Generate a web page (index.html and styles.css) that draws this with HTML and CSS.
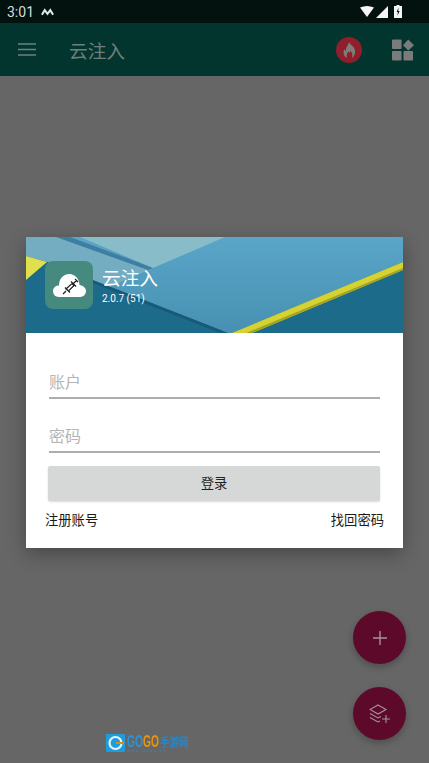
FILE: index.html
```html
<!DOCTYPE html>
<html lang="zh-CN">
<head>
  <meta charset="UTF-8">
  <meta name="viewport" content="width=device-width, initial-scale=1.0">
  <title>云注入</title>
  <link rel="stylesheet" href="styles.css">
</head>
<body>
  <div class="status-bar">
    <span class="clock">3:01</span>
    <svg class="status-m" width="13" height="8" viewBox="0 0 14 8"><path d="M1 7 L4 2 L7 6 L10 2 L13 7" fill="none" stroke="#e2e6e5" stroke-width="2.200"/></svg>
    <span class="spacer"></span>
    <svg width="14" height="11" viewBox="0 0 14 11"><path d="M0 1.500 Q7 -1.500 14 1.500 L7 11 Z" fill="#f4f6f5"/></svg>
    <svg class="status-signal" width="12" height="12" viewBox="0 0 12 12"><path d="M0 12 L12 0 L12 12 Z" fill="#f4f6f5"/></svg>
    <svg class="status-battery" width="8" height="13" viewBox="0 0 8 13"><path d="M2.500 0 H5.500 V1 H8 V13 H0 V1 H2.500 Z" fill="#f4f6f5"/><path d="M4.600 2.500 L2.600 7 H3.900 L3.400 10.800 L5.600 6 H4.200 Z" fill="#03120f"/></svg>
  </div>

  <header class="toolbar">
    <svg class="menu-icon" width="18" height="13" viewBox="0 0 18 13"><path d="M0 1 H18 M0 6.500 H18 M0 12 H18" stroke="#6e7f7c" stroke-width="1.600"/></svg>
    <span class="toolbar-title">云注入</span>
    <span class="spacer"></span>
    <span class="fire-badge">
      <svg width="15" height="16" viewBox="0 0 18 20"><path d="M9 0 C10 4 13 4 15 8 C17 12 16 17 12 20 C13.500 16 12 13 10 11 C9.500 14 8 14 7.500 12 C5.500 14 5 17 6 20 C2 18 0.500 13 2.500 9 C3 10.500 4 11 4.500 11 C4 7 7 4 9 0 Z" fill="#7d7d7a"/></svg>
    </span>
    <svg class="grid-icon" width="22" height="22" viewBox="0 0 23 22" fill="#7b7b7b">
      <rect x="0" y="0" width="10" height="10" rx="1"/>
      <path d="M17 0 L23 6 L17 11.500 L11.500 6 Z"/>
      <rect x="0" y="12" width="10" height="10" rx="1"/>
      <rect x="12" y="12" width="10" height="10" rx="1"/>
    </svg>
  </header>

  <main class="content">
    <div class="dialog">
      <div class="dialog-head">
        <svg class="head-art" width="377" height="96" viewBox="0 0 377 96">
          <defs>
            <linearGradient id="panel" x1="0" y1="0" x2="0" y2="1">
              <stop offset="0" stop-color="#5aa6c8"/>
              <stop offset="1" stop-color="#4790b2"/>
            </linearGradient>
          </defs>
          <rect width="377" height="96" fill="#1d6b8a"/>
          <polygon points="0,0 377,0 377,25 206,96 202,96 21,25" fill="url(#panel)"/>
          <polygon points="0,0 30,0 127,31 84,50 21,25 0,19" fill="#74adc2"/>
          <polygon points="54,0 199,0 127,31" fill="#88bcc8"/>
          <polygon points="30,0 44,0 127,31 122,33" fill="#3e7ea0"/>
          <polygon points="0,19 21,25 0,43" fill="#dfe04c"/>
          <polygon points="21,25 202,96 194,96 21,28" fill="#175a78"/>
          <polygon points="206,96 377,25 377,33 226,96" fill="#d6d232"/>
          <polygon points="220,96 377,31 377,33 226,96" fill="#a3a424"/>
        </svg>
        <div class="app-icon">
          <svg width="33" height="26" viewBox="0 0 33 26">
            <path d="M6 25 C2 25 0 22 0 19 C0 15.500 3 13.500 6 13.500 C6 6 11 2 16.500 2 C22 2 26.500 7 26.500 13 C30 13.500 33 16 33 19 C33 22 30.500 25 27 25 Z" fill="#fff"/>
            <path d="M10 22 L13 19 M12 15.500 L17 20.500 M13 17 L19 11.500 L21 13.500 L15.500 19 Z M18 9.500 L23 14.500 M20 12 L23.500 8.500 M22 7 L25 10" fill="none" stroke="#1c1c1c" stroke-width="1.200"/>
          </svg>
        </div>
        <div class="app-info">
          <div class="app-name">云注入</div>
          <div class="app-version">2.0.7 (51)</div>
        </div>
      </div>
      <form class="login-form">
        <input class="field" type="text" placeholder="账户">
        <input class="field" type="password" placeholder="密码">
        <button class="login-btn" type="button">登录</button>
      </form>
      <div class="links">
        <a href="#">注册账号</a>
        <a href="#">找回密码</a>
      </div>
    </div>
  </main>

  <button class="fab fab-add" type="button">
    <svg width="14" height="14" viewBox="0 0 14 14"><path d="M7 0 V14 M0 7 H14" stroke="#a5929a" stroke-width="1.400"/></svg>
  </button>
  <button class="fab fab-layers" type="button">
    <svg width="22" height="20" viewBox="0 0 22 20" fill="none" stroke="#a5929a" stroke-width="1.100"><path d="M9 1 L17 5.500 L9 10 L1 5.500 Z M1 9.500 L9 14 L12 12.500 M1 13.500 L9 18 L11 17 M17 11 V19 M13 15 H21"/></svg>
  </button>

  <div class="watermark">
    <svg width="19" height="18" viewBox="0 0 19 18"><rect width="19" height="18" rx="1" fill="#1d9ddb"/><circle cx="9.500" cy="9" r="6" fill="none" stroke="#e6f3f8" stroke-width="2.200"/><path d="M10 9 H18" stroke="#e08a18" stroke-width="2"/></svg>
    <div class="wm-text">
      <div class="wm-top"><span class="wm-go wm-blue">GO</span><span class="wm-go wm-orange">GO</span><span class="wm-name">手游网</span></div>
      <div class="wm-url">www.gogo.cn</div>
    </div>
  </div>
</body>
</html>
```

FILE: styles.css
```css
html, body {
  height: 100%;
}

body {
  margin: 0;
  position: relative;
  overflow: hidden;
  display: flex;
  flex-direction: column;
  background-color: #666;
  font-family: Roboto, "Noto Sans CJK SC", sans-serif;
}

.spacer {
  flex: 1;
}

.status-bar {
  height: 23px;
  display: flex;
  align-items: center;
  padding: 0 27px 0 7px;
  background-color: #03120f;
  color: #d8dcdb;
  font-size: 14px;
}

.status-m {
  margin-left: 7px;
}

.status-signal {
  margin-left: 2px;
}

.status-battery {
  margin-left: 6px;
}

.toolbar {
  height: 53px;
  display: flex;
  align-items: center;
  padding: 0 15px 0 18px;
  background-color: #03352f;
  box-sizing: border-box;
}

.toolbar-title {
  margin-left: 33px;
  font-size: 18.700px;
  color: #6e7f7c;
}

.fire-badge {
  width: 26px;
  height: 26px;
  display: flex;
  align-items: center;
  justify-content: center;
  border-radius: 50%;
  background-color: #8f1f2b;
}

.grid-icon {
  margin-left: 30px;
}

.content {
  flex: 1;
  padding: 161px 26px 0;
}

.dialog {
  height: 311px;
  background-color: #fff;
  box-shadow: 0 6px 18px rgba(0, 0, 0, 0.3);
}

.dialog-head {
  position: relative;
  height: 96px;
  display: flex;
  padding: 24px 0 0 19px;
  box-sizing: border-box;
  color: #fff;
}

.head-art {
  position: absolute;
  left: 0;
  top: 0;
}

.app-icon {
  position: relative;
  width: 48px;
  height: 48px;
  display: flex;
  align-items: center;
  justify-content: center;
  border-radius: 8px;
  background-color: #45897f;
}

.app-info {
  position: relative;
  margin-left: 9px;
}

.app-name {
  margin-top: 5px;
  font-size: 18.700px;
  line-height: 26px;
}

.app-version {
  font-size: 10px;
  line-height: 12px;
  margin-top: 1px;
}

.login-form {
  display: flex;
  flex-direction: column;
  padding: 26px 23px 0;
}

.field {
  height: 40px;
  margin-bottom: 14px;
  padding: 9px 0 0;
  border: none;
  border-bottom: 2px solid #adadad;
  outline: none;
  font-family: inherit;
  font-size: 16px;
  box-sizing: border-box;
}

.field::placeholder {
  color: #b4b4b4;
}

.login-btn {
  height: 35px;
  margin: -1px 0 0 -1px;
  padding: 0 0 3px;
  border: none;
  border-radius: 2px;
  background-color: #d6d8d8;
  box-shadow: 0 1px 2px rgba(0, 0, 0, 0.15);
  color: #222;
  font-family: inherit;
  font-size: 13.300px;
}

.links {
  display: flex;
  justify-content: space-between;
  margin-top: 11px;
  padding: 0 19px;
  font-size: 13.300px;
  line-height: 18px;
}

.links a {
  color: #1a1a1a;
  text-decoration: none;
}

.fab {
  position: absolute;
  left: 353px;
  width: 53px;
  height: 53px;
  display: flex;
  align-items: center;
  justify-content: center;
  padding: 0;
  border: none;
  border-radius: 50%;
  background-color: #5d0a2a;
  box-shadow: 0 3px 7px rgba(0, 0, 0, 0.25);
}

.fab-add {
  top: 611px;
}

.fab-layers {
  top: 687px;
}

.watermark {
  position: absolute;
  left: 106px;
  top: 734px;
  display: flex;
  gap: 2px;
  filter: blur(0.4px);
}

.wm-text {
  font-family: "Liberation Sans", "Noto Sans CJK SC", sans-serif;
}

.wm-top {
  display: flex;
  height: 15px;
  align-items: center;
  font-weight: bold;
}

.wm-go {
  width: 16px;
  font-size: 16px;
  transform: scaleX(0.64);
  transform-origin: left center;
  white-space: nowrap;
}

.wm-blue {
  color: #2a93d6;
}

.wm-orange {
  color: #e8950c;
}

.wm-name {
  margin-left: 1px;
  font-size: 9.500px;
  color: #2a86c6;
  transform: scaleY(1.300);
}

.wm-url {
  font-size: 4px;
  line-height: 4px;
  letter-spacing: 1.500px;
  color: #3f87b5;
}
```
